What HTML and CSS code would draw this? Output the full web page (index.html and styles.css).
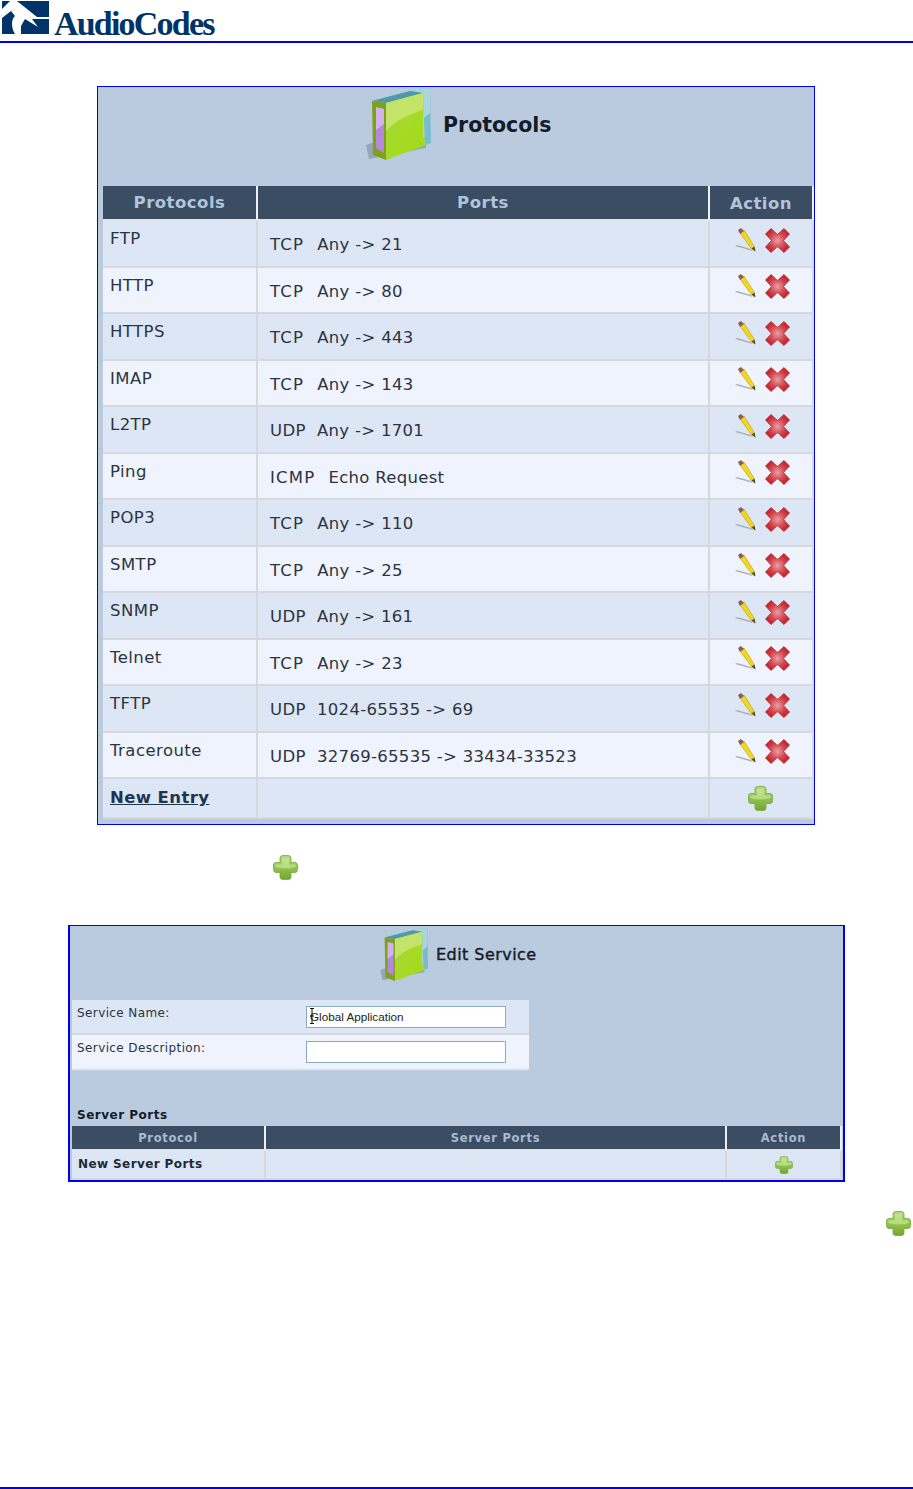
FILE: index.html
```html
<!DOCTYPE html>
<html lang="en">
<head>
<meta charset="utf-8">
<title>Protocols</title>
<link rel="stylesheet" href="styles.css">
</head>
<body>
<svg class="defs" width="0" height="0" aria-hidden="true">
  <defs>
    <linearGradient id="gGreen" x1="0" y1="0" x2="1" y2="1"><stop offset="0" stop-color="#a6d83a"/><stop offset="1" stop-color="#a4dc14"/></linearGradient>
    <linearGradient id="gPlus" x1="0" y1="0" x2="0" y2="1"><stop offset="0" stop-color="#b8dc80"/><stop offset=".5" stop-color="#93c34e"/><stop offset="1" stop-color="#72a82e"/></linearGradient>
    <radialGradient id="gRed" cx=".5" cy=".5" r=".55"><stop offset="0" stop-color="#e8a0a6"/><stop offset=".55" stop-color="#d64a52"/><stop offset="1" stop-color="#bf1f28"/></radialGradient>
    <symbol id="book" viewBox="0 0 66 72">
      <path d="M0 57 L3 71 L60 60 L60 50 L20 50Z" fill="#8d99a8" opacity=".75"/>
      <path d="M6 13 L44 3 L64 0 L65 55 L59 57 L57 5 L20 15Z" fill="#76bccb"/>
      <path d="M44 3 L64 0 L64 25 L58 30 L57 5Z" fill="#a9d6de"/>
      <path d="M6 13 L20 15 L57 5 L44 3Z" fill="#4f9aa8"/>
      <path d="M6 13 L7 67 L20 72 L20 15Z" fill="#7ea11c"/>
      <path d="M10 19 L18 21 L18 65 L10 60Z" fill="#b488dc"/>
      <path d="M10 19 L18 21 L18 36 L10 42Z" fill="#d1b2ea"/>
      <path d="M20 15 L57 5 L57 50 L60 53 L60 57 L20 72Z" fill="url(#gGreen)"/>
      <path d="M20 15 L57 5 L57 22 C44 26 30 32 20 43Z" fill="#cfe67e" opacity=".75"/>
    </symbol>
    <symbol id="pencil" viewBox="0 0 22 24">
      <path d="M0 18 L18 23 L16 21 L2 17Z" fill="#a9aeb3"/>
      <path d="M5 5 L9 2 L19 18 L20 23 L16 20Z" fill="#f1d81c" stroke="#b89a12" stroke-width=".6"/>
      <path d="M3 2 L6 0 L9 3 L5 6Z" fill="#8a5f5a"/>
      <path d="M16.5 20.5 L19.5 18.5 L20.5 23.5Z" fill="#4a4a3a"/>
    </symbol>
    <symbol id="cross" viewBox="0 0 25 25">
      <path d="M6 .5 L12.500 6.500 L19 .5 L24.500 6 L18.500 12.500 L24.500 19 L19 24.500 L12.500 18.500 L6 24.500 L.5 19 L6.500 12.500 L.5 6Z" fill="url(#gRed)" stroke="#bb2a30" stroke-width=".8" stroke-linejoin="round"/>
    </symbol>
    <symbol id="plus" viewBox="0 0 25 25">
      <path d="M7 3 Q7 .5 10 .5 H15 Q18 .5 18 3 V7.500 H22 Q24.500 7.500 24.500 10 V14.500 Q24.500 17.500 22 17.500 H18 V22 Q18 24.500 15 24.500 H10 Q7 24.500 7 22 V17.500 H3 Q.5 17.500 .5 14.500 V10 Q.5 7.500 3 7.500 H7Z" fill="url(#gPlus)" stroke="#76a63a" stroke-width=".8"/>
      <path d="M9 3 H16 V9.500 H22.500 V12 Q12 15 2.500 12 V9.500 H9Z" fill="#d6ecae" opacity=".55"/>
    </symbol>
  </defs>
</svg>

<header class="brand">
  <svg class="brand-mark" viewBox="0 0 47 33" aria-hidden="true">
    <path d="M0 0 H8 L0 8Z M15 0 H47 V16 H35Z" fill="#003468"/>
    <path d="M0 17 L9 10 L13 15 C9 18 9 27 13 33 H0Z" fill="#003468"/>
    <path d="M19 33 V25 L23 18 L36 26 L30 18 H47 V33Z" fill="#003468"/>
  </svg>
  <span class="brand-name">AudioCodes</span>
</header>

<main class="page">
  <section class="panel panel-protocols">
    <div class="panel-head">
      <svg class="book"><use href="#book"/></svg>
      <h1 class="panel-title">Protocols</h1>
    </div>
    <div class="tbl">
      <div class="row row-head"><div class="c c1">Protocols</div><div class="c c2">Ports</div><div class="c c3">Action</div></div>
      <div class="row odd"><div class="c c1">FTP</div><div class="c c2"><span class="proto">TCP</span>  Any -&gt; 21</div><div class="c c3"><svg class="i-pencil"><use href="#pencil"/></svg><svg class="i-cross"><use href="#cross"/></svg></div></div>
      <div class="row even"><div class="c c1">HTTP</div><div class="c c2"><span class="proto">TCP</span>  Any -&gt; 80</div><div class="c c3"><svg class="i-pencil"><use href="#pencil"/></svg><svg class="i-cross"><use href="#cross"/></svg></div></div>
      <div class="row odd"><div class="c c1">HTTPS</div><div class="c c2"><span class="proto">TCP</span>  Any -&gt; 443</div><div class="c c3"><svg class="i-pencil"><use href="#pencil"/></svg><svg class="i-cross"><use href="#cross"/></svg></div></div>
      <div class="row even"><div class="c c1">IMAP</div><div class="c c2"><span class="proto">TCP</span>  Any -&gt; 143</div><div class="c c3"><svg class="i-pencil"><use href="#pencil"/></svg><svg class="i-cross"><use href="#cross"/></svg></div></div>
      <div class="row odd"><div class="c c1">L2TP</div><div class="c c2"><span class="udp">UDP</span>  Any -&gt; 1701</div><div class="c c3"><svg class="i-pencil"><use href="#pencil"/></svg><svg class="i-cross"><use href="#cross"/></svg></div></div>
      <div class="row even"><div class="c c1">Ping</div><div class="c c2"><span class="proto">ICMP</span>  Echo Request</div><div class="c c3"><svg class="i-pencil"><use href="#pencil"/></svg><svg class="i-cross"><use href="#cross"/></svg></div></div>
      <div class="row odd"><div class="c c1">POP3</div><div class="c c2"><span class="proto">TCP</span>  Any -&gt; 110</div><div class="c c3"><svg class="i-pencil"><use href="#pencil"/></svg><svg class="i-cross"><use href="#cross"/></svg></div></div>
      <div class="row even"><div class="c c1">SMTP</div><div class="c c2"><span class="proto">TCP</span>  Any -&gt; 25</div><div class="c c3"><svg class="i-pencil"><use href="#pencil"/></svg><svg class="i-cross"><use href="#cross"/></svg></div></div>
      <div class="row odd"><div class="c c1">SNMP</div><div class="c c2"><span class="udp">UDP</span>  Any -&gt; 161</div><div class="c c3"><svg class="i-pencil"><use href="#pencil"/></svg><svg class="i-cross"><use href="#cross"/></svg></div></div>
      <div class="row even"><div class="c c1">Telnet</div><div class="c c2"><span class="proto">TCP</span>  Any -&gt; 23</div><div class="c c3"><svg class="i-pencil"><use href="#pencil"/></svg><svg class="i-cross"><use href="#cross"/></svg></div></div>
      <div class="row odd"><div class="c c1">TFTP</div><div class="c c2"><span class="udp">UDP</span>  1024-65535 -&gt; 69</div><div class="c c3"><svg class="i-pencil"><use href="#pencil"/></svg><svg class="i-cross"><use href="#cross"/></svg></div></div>
      <div class="row even"><div class="c c1">Traceroute</div><div class="c c2"><span class="udp">UDP</span>  32769-65535 -&gt; 33434-33523</div><div class="c c3"><svg class="i-pencil"><use href="#pencil"/></svg><svg class="i-cross"><use href="#cross"/></svg></div></div>
      <div class="row row-new"><div class="c c1"><a class="new-link" href="#">New Entry</a></div><div class="c c2"></div><div class="c c3"><svg class="i-plus"><use href="#plus"/></svg></div></div>
    </div>
  </section>

  <div class="line line-a"><svg class="i-plus"><use href="#plus"/></svg></div>

  <section class="panel panel-edit">
    <div class="panel-head">
      <svg class="book"><use href="#book"/></svg>
      <h2 class="panel-title">Edit Service</h2>
    </div>
    <div class="form">
      <div class="form-row odd">
        <label class="form-label" for="svc-name">Service Name:</label>
        <div class="field">
          <input class="input" id="svc-name" type="text" value="Global Application">
          <svg class="ibeam" viewBox="0 0 5 16" aria-hidden="true"><path d="M0 .5H4M2 .5V15.500M0 15.500H4M0 8H4" fill="none" stroke="#111" stroke-width="1"/></svg>
        </div>
      </div>
      <div class="form-row even">
        <label class="form-label" for="svc-desc">Service Description:</label>
        <div class="field"><input class="input" id="svc-desc" type="text"></div>
      </div>
    </div>
    <h3 class="sub-title">Server Ports</h3>
    <div class="tbl2">
      <div class="row2 row2-head"><div class="d d1">Protocol</div><div class="d d2">Server Ports</div><div class="d d3">Action</div></div>
      <div class="row2 row2-new"><div class="d d1">New Server Ports</div><div class="d d2"></div><div class="d d3"><svg class="i-plus-sm"><use href="#plus"/></svg></div></div>
    </div>
  </section>

  <div class="line line-b"><svg class="i-plus"><use href="#plus"/></svg></div>
</main>

<footer class="foot"></footer>
</body>
</html>
```
FILE: styles.css
```css
html, body { margin: 0; padding: 0; background: #fff; }
body { width: 913px; height: 1489px; display: flex; flex-direction: column; font-family: "DejaVu Sans", sans-serif; color: #2c3440; overflow: hidden; }
.defs { position: absolute; }

.brand { flex: none; box-sizing: border-box; border-bottom: 2px solid #0000e0; height: 43px; display: flex; align-items: flex-start; padding: 1px 0 0 2px; }
.brand-mark { width: 47px; height: 33px; flex: none; }
.brand-name { font-family: "Liberation Serif", serif; font-weight: bold; font-size: 34px; letter-spacing: -1.800px; line-height: 33px; color: #003468; margin: 6px 0 0 5px; }

.page { flex: 1; display: flex; flex-direction: column; }
.panel { background: #bbcbdf; box-sizing: border-box; }
.panel-protocols { width: 718px; height: 739px; margin: 43px 0 0 97px; border: 1px solid #0000f0; padding: 0 0 0 5px; }
.panel-protocols .panel-head { height: 99px; display: flex; align-items: flex-start; padding: 1px 0 0 263px; box-sizing: border-box; }
.panel-protocols .book { width: 66px; height: 72px; }
.panel-protocols .panel-title { margin: 25px 0 0 11px; font-size: 20.500px; line-height: 24px; font-weight: bold; color: #141c28; }

.tbl { width: 711px; }
.row { display: grid; grid-template-columns: 155px 452px 104px; height: 46.500px; box-sizing: border-box; }
.c { box-sizing: border-box; border-bottom: 2px solid #d6d9dc; border-right: 2px solid #d6d9dc; min-width: 0; }
.odd .c { background: #dce6f5; }
.even .c { background: #eef3fd; }
.row .c1 { padding: 7px 0 0 7px; font-size: 16.500px; letter-spacing: .45px; line-height: 22px; }
.row .c2 { padding: 13px 0 0 12px; font-size: 16.500px; letter-spacing: .3px; line-height: 22px; white-space: pre; }
.proto { letter-spacing: 1.200px; margin-right: 2px; }
.udp { letter-spacing: .4px; }
.row .c3 { padding: 6.500px 0 0 25px; display: flex; gap: 8px; align-items: flex-start; }
.row-head { height: 35px; }
.row-head .c { background: #3a4d63; border-right: 2px solid #eef0f3; border-bottom: 2px solid #dfe3e8; padding: 1px 0 0; display: flex; align-items: center; justify-content: center; color: #b2c4da; font-weight: bold; font-size: 16.500px; letter-spacing: .5px; }
.row-new { height: 40px; }
.row-new .c { background: #dce6f5; }
.row .c1 .new-link { letter-spacing: .4px; }
.row-new .c1 { padding-top: 8px; }
.row-new .c3 { padding: 7px 0 0 38px; }
.new-link { color: #1f3450; font-weight: bold; text-decoration: underline; }
.i-pencil { width: 22px; height: 24px; flex: none; }
.i-cross { width: 25px; height: 25px; flex: none; }
.i-plus { width: 25px; height: 25px; display: block; flex: none; }
.i-plus-sm { width: 18px; height: 18px; display: block; flex: none; }

.line { display: flex; }
.line-a { height: 100px; padding: 30px 0 0 273px; box-sizing: border-box; }
.panel-edit { width: 777px; height: 257px; margin-left: 68px; border: 2px solid #0000f0; border-top-width: 1px; padding: 0 2px 0 2px; }
.panel-edit .panel-head { height: 74px; display: flex; align-items: flex-start; padding: 2px 0 0 308px; box-sizing: border-box; }
.panel-edit .book { width: 49px; height: 53px; }
.panel-edit .panel-title { margin: 17px 0 0 7px; font-size: 16px; line-height: 20px; font-weight: normal; color: #141c28; -webkit-text-stroke: .4px #141c28; letter-spacing: .45px; }

.form { width: 457px; }
.form-row { display: flex; height: 35px; box-sizing: border-box; padding-left: 5px; border-bottom: 2px solid #d6d9dc; }
.form-row.odd { background: #dce6f5; }
.form-row.even { background: #eef3fd; border-bottom-color: #e6eaf0; }
.form-label { width: 229px; font-size: 12px; letter-spacing: .4px; line-height: 14px; padding-top: 6px; flex: none; }
.field { position: relative; padding-top: 6px; }
.input { display: block; box-sizing: border-box; width: 200px; height: 22px; margin: 0; padding: 0 0 1px 3px; border: 1px solid #8aaac8; background: #fff; font-family: "Liberation Sans", sans-serif; font-size: 11.700px; color: #222; outline: none; }
.ibeam { position: absolute; left: 4px; top: 8px; width: 5px; height: 16px; }

.sub-title { margin: 38px 0 0 5px; font-size: 12px; letter-spacing: .5px; line-height: 14px; font-weight: bold; color: #141c28; height: 18px; }
.tbl2 { width: 770px; }
.row2 { display: grid; grid-template-columns: 194px 461px 115px; box-sizing: border-box; }
.d { box-sizing: border-box; border-right: 2px solid #d6d9dc; border-bottom: 2px solid #d6d9dc; }
.row2-head { height: 25px; }
.row2-head .d { background: #3a4d63; color: #a9bbd1; font-weight: bold; font-size: 11.500px; letter-spacing: .7px; display: flex; align-items: center; justify-content: center; border-right-color: #eef0f3; border-bottom-color: #dfe3e8; }
.row2-new { height: 29px; }
.row2-new .d { background: #dce6f5; }
.row2-new .d1 { font-weight: bold; font-size: 12px; letter-spacing: .4px; padding: 6px 0 0 6px; color: #1f2a38; }
.row2-new .d3 { display: flex; justify-content: center; padding-top: 5px; }

.line-b { padding: 29px 0 0 886px; }

.foot { height: 2px; flex: none; background: #0000e0; }
```
